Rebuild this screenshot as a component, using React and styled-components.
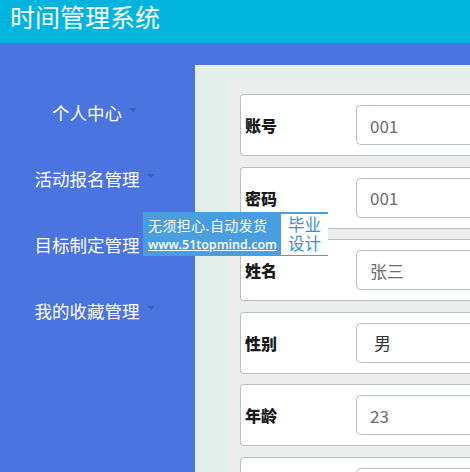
import React from 'react';
import styled, { createGlobalStyle } from 'styled-components';

const GlobalStyle = createGlobalStyle`
  html, body {
    margin: 0;
    padding: 0;
    overflow: hidden;
    background: #4a74e0;
    font-family: "Noto Sans CJK SC", "Noto Sans", sans-serif;
  }
`;

const menu = ['个人中心', '活动报名管理', '目标制定管理', '我的收藏管理'];

const fields = [
  { label: '账号', value: '001' },
  { label: '密码', value: '001' },
  { label: '姓名', value: '张三' },
  { label: '性别', value: '男', select: true },
  { label: '年龄', value: '23' },
  { label: '', value: '' },
];

const App = () => {
  return (
    <>
      <GlobalStyle />
      <Page>
        <Header>
          <Title>时间管理系统</Title>
        </Header>
        <Body>
          <Sidebar>
            {menu.map((item) => (
              <MenuItem key={item}>
                {item}
                <Caret />
              </MenuItem>
            ))}
          </Sidebar>
          <Main>
            <Panel>
              <Inner>
                {fields.map((f, i) => (
                  <Card key={i}>
                    <Label>{f.label}</Label>
                    <Input select={f.select}>{f.value}</Input>
                  </Card>
                ))}
              </Inner>
            </Panel>
          </Main>
        </Body>
        <Watermark>
          <WmText>
            <WmTop>无须担心.自动发货</WmTop>
            <WmLink>www.51topmind.com</WmLink>
          </WmText>
          <WmBadge>
            <span>毕业</span>
            <span>设计</span>
          </WmBadge>
        </Watermark>
      </Page>
    </>
  );
};

const Page = styled.div`
  position: relative;
  width: 470px;
  height: 472px;
  overflow: hidden;
  background: #4a74e0;
`;

const Header = styled.div`
  height: 43px;
  background: #00b4de;
  padding: 1px 0 0 10px;
  box-sizing: border-box;
`;

const Title = styled.div`
  color: #ffffff;
  font-size: 25px;
  line-height: 30px;
`;

const Body = styled.div`
  display: flex;
  height: 429px;
`;

const Sidebar = styled.div`
  width: 195px;
  flex-shrink: 0;
  padding: 40px 6px 0 0;
  box-sizing: border-box;
  display: flex;
  flex-direction: column;
  align-items: center;
`;

const MenuItem = styled.div`
  height: 66px;
  display: flex;
  align-items: center;
  justify-content: center;
  color: #ffffff;
  font-size: 17.5px;
  margin-top: -4px;
  margin-bottom: 4px;
`;

const Caret = styled.span`
  width: 0;
  height: 0;
  margin-left: 7px;
  margin-top: -4px;
  border-left: 4px solid transparent;
  border-right: 4px solid transparent;
  border-top: 4px solid #3a5cbc;
`;

const Main = styled.div`
  flex: 1;
  padding-top: 22px;
  min-width: 0;
`;

const Panel = styled.div`
  height: 100%;
  background: #e4eeea;
  padding: 17px 0 0 33px;
  box-sizing: border-box;
`;

const Inner = styled.div`
  height: 100%;
  background: #eceeee;
  padding: 12px 0 0 12px;
  box-sizing: border-box;
  display: flex;
  flex-direction: column;
  gap: 10.5px;
`;

const Card = styled.div`
  height: 62px;
  flex-shrink: 0;
  width: 300px;
  background: #ffffff;
  border: 1px solid #b9bfc9;
  border-right: none;
  border-radius: 4px 0 0 4px;
  box-sizing: border-box;
  display: flex;
  align-items: center;
  padding-left: 4px;
`;

const Label = styled.div`
  width: 111px;
  flex-shrink: 0;
  font-size: 16px;
  font-weight: 900;
  color: #1a1a1a;
`;

const Input = styled.div`
  flex: 1;
  height: 40px;
  border: 1px solid #b9bfc9;
  border-right: none;
  border-radius: 5px 0 0 5px;
  box-sizing: border-box;
  display: flex;
  align-items: center;
  padding-left: ${(p) => (p.select ? '17px' : '13px')};
  font-size: 17px;
  color: ${(p) => (p.select ? '#333333' : '#6a6a6a')};
`;

const Watermark = styled.div`
  position: absolute;
  left: 143px;
  top: 212px;
  width: 185px;
  height: 44px;
  background: #4a9ee0;
  display: flex;
  align-items: center;
  box-sizing: border-box;
  padding: 1px 2px 1px 5px;
  gap: 4px;
`;

const WmText = styled.div`
  display: flex;
  flex-direction: column;
  color: #ffffff;
`;

const WmTop = styled.div`
  font-size: 14px;
  line-height: 21px;
  letter-spacing: 0.4px;
  white-space: nowrap;
`;

const WmLink = styled.div`
  font-family: "Open Sans", "Noto Sans", sans-serif;
  font-size: 12.5px;
  line-height: 18px;
  font-weight: 600;
  text-decoration: underline;
  white-space: nowrap;
`;

const WmBadge = styled.div`
  margin-left: auto;
  width: 47px;
  height: 41px;
  flex-shrink: 0;
  background: #ffffff;
  display: flex;
  flex-direction: column;
  align-items: center;
  justify-content: center;
  color: #3a8fd8;
  font-size: 16.5px;
  line-height: 19px;
`;

export default App;
